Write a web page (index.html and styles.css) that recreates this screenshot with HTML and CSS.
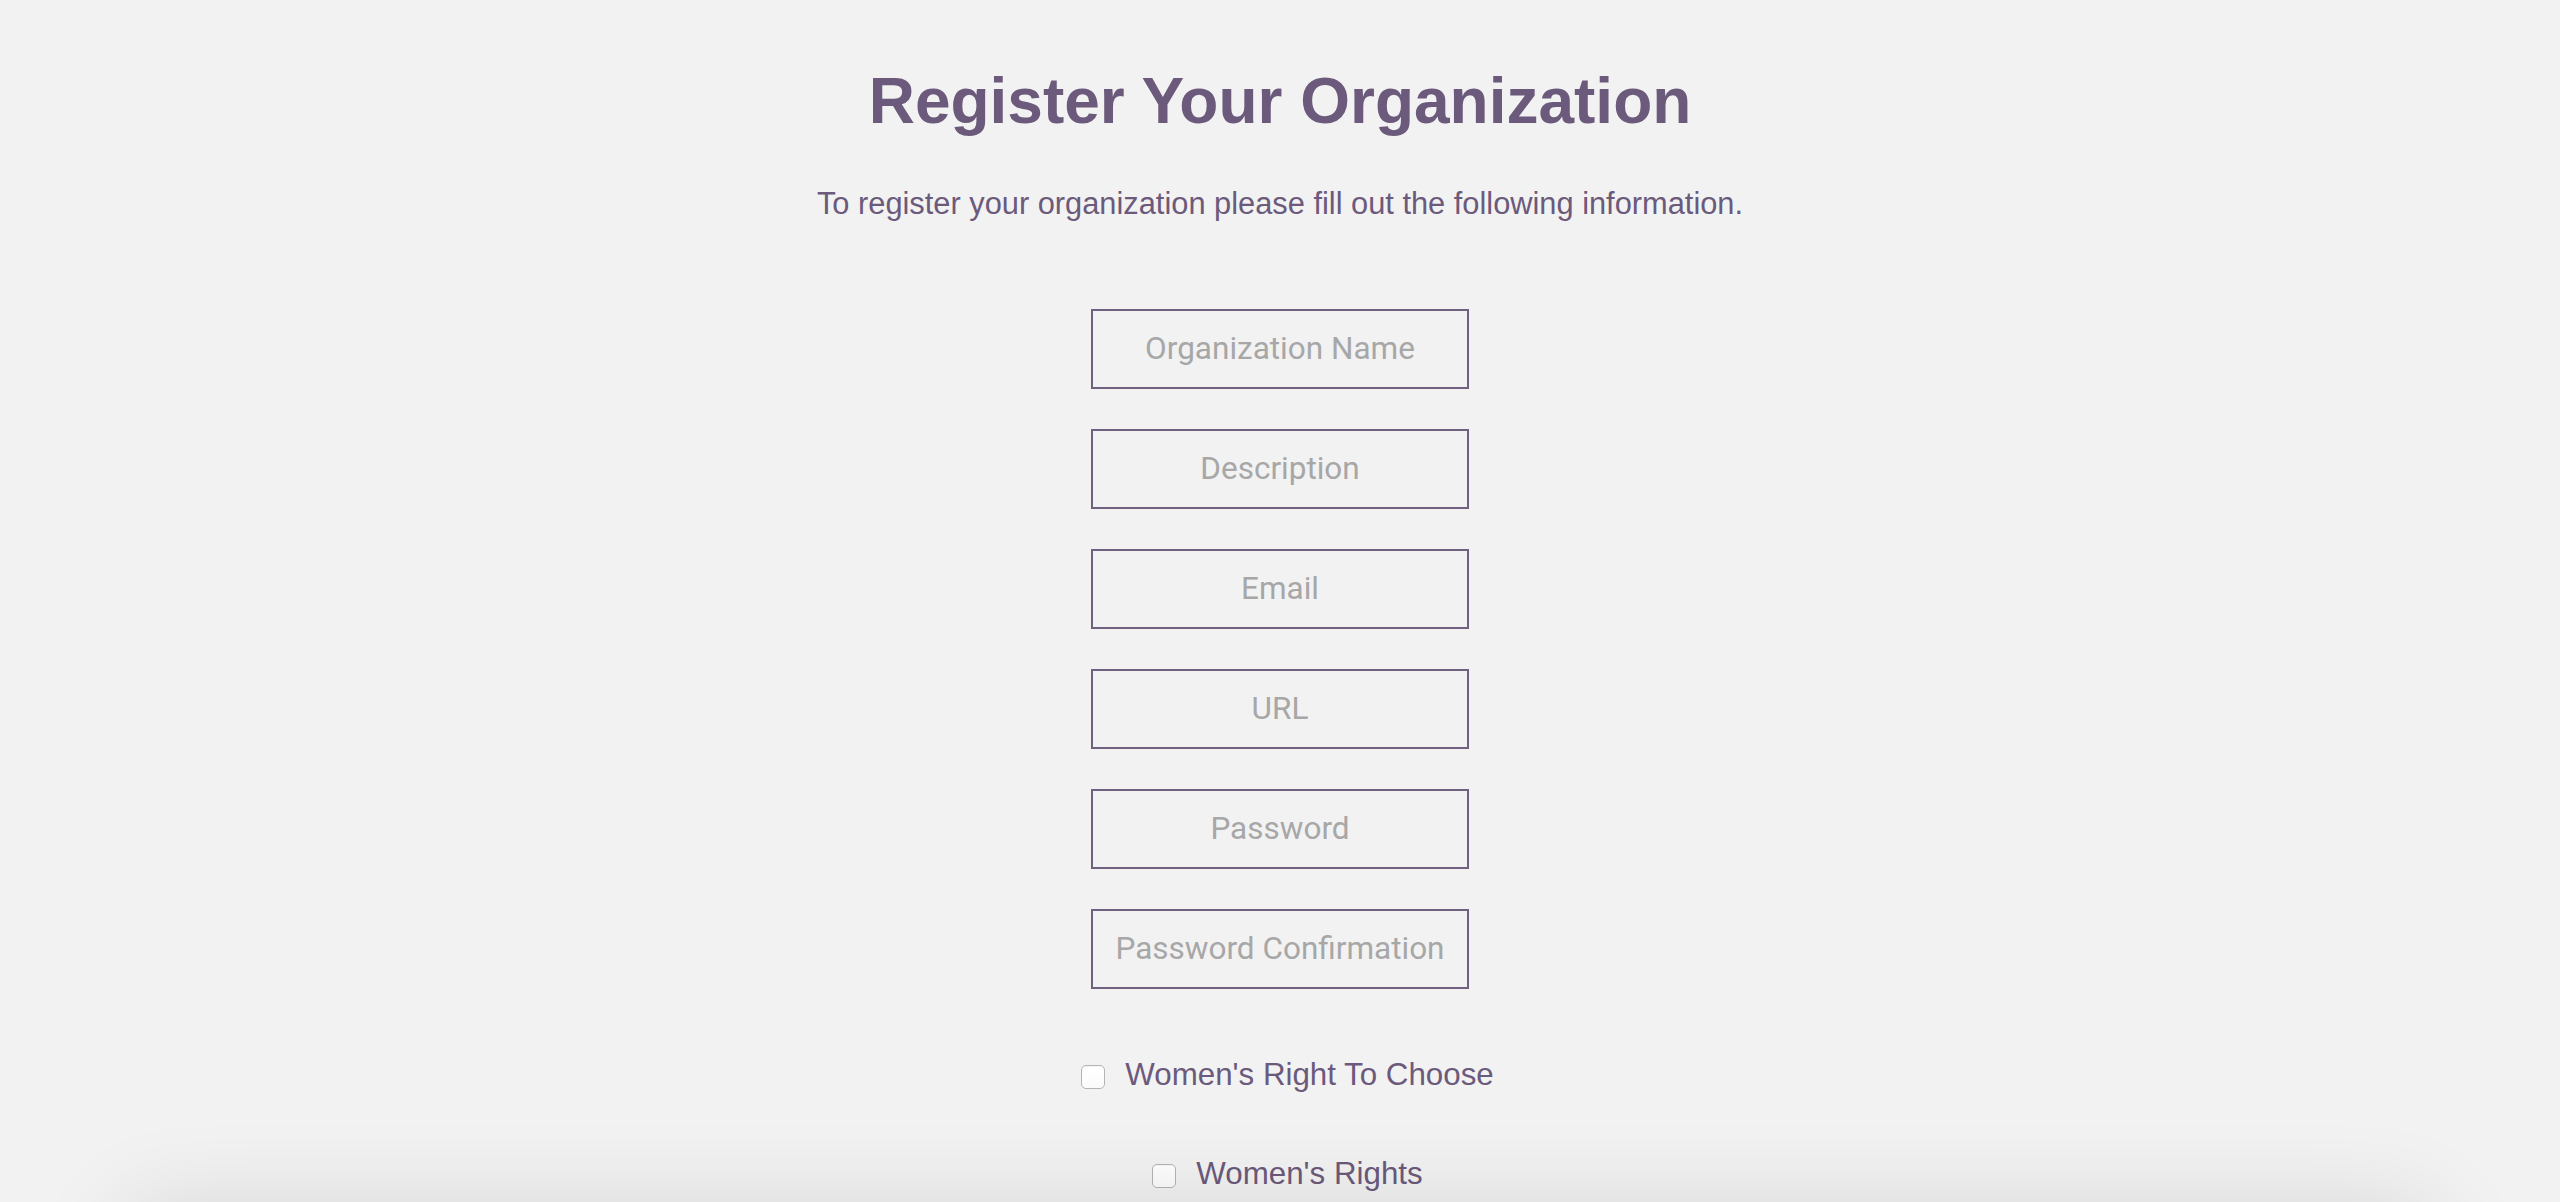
FILE: index.html
```html
<!DOCTYPE html>
<html lang="en">
<head>
<meta charset="utf-8">
<title>Register Your Organization</title>
<link rel="stylesheet" href="styles.css">
</head>
<body>
<main class="page">
  <h1 class="title">Register Your Organization</h1>
  <p class="subtitle">To register your organization please fill out the following information.</p>
  <form class="form">
    <input class="field" type="text" placeholder="Organization Name">
    <input class="field" type="text" placeholder="Description">
    <input class="field" type="email" placeholder="Email">
    <input class="field" type="url" placeholder="URL">
    <input class="field" type="password" placeholder="Password">
    <input class="field" type="password" placeholder="Password Confirmation">
    <div class="choices">
      <label class="choice"><input class="check" type="checkbox"><span class="choice-text">Women's Right To Choose</span></label>
      <label class="choice"><input class="check" type="checkbox"><span class="choice-text">Women's Rights</span></label>
    </div>
  </form>
  <section class="panel"></section>
</main>
</body>
</html>
```
FILE: styles.css
```css
html, body {
  margin: 0;
  padding: 0;
  background: #f2f2f2;
}
body {
  font-family: "Liberation Sans", Arial, sans-serif;
  color: #6b5a7b;
  overflow: hidden;
}
.page {
  display: flex;
  flex-direction: column;
  align-items: center;
  text-align: center;
}
.title {
  margin: 69px 0 0;
  font-size: 64px;
  line-height: 1;
  font-weight: 700;
  color: #6b5a7b;
}
.subtitle {
  margin: 56px 0 0;
  font-size: 30.8px;
  line-height: 1;
  color: #6b5a7b;
}
.form {
  margin-top: 89px;
  display: flex;
  flex-direction: column;
  align-items: center;
  gap: 40px;
}
.field {
  box-sizing: border-box;
  width: 378px;
  height: 80px;
  margin: 0;
  padding: 0 4px;
  border: 2px solid #716080;
  background: transparent;
  font-family: Roboto, "Liberation Sans", sans-serif;
  font-size: 31.5px;
  text-align: center;
  color: #555;
  outline: none;
}
.field::placeholder {
  color: #a7a7a7;
}
.choices {
  margin-top: 30px;
  display: flex;
  flex-direction: column;
  align-items: center;
  gap: 68px;
}
.choice {
  display: flex;
  align-items: flex-start;
  gap: 20px;
  padding-left: 15px;
  cursor: pointer;
}
.check {
  appearance: none;
  -webkit-appearance: none;
  box-sizing: border-box;
  width: 24px;
  height: 24px;
  margin: 6px 0 0;
  border: 1px solid #b4b4b4;
  border-radius: 5px;
  background: linear-gradient(#ffffff, #fbfbfb);
  box-shadow: inset 0 1px 1px rgba(0, 0, 0, 0.04);
}
.choice-text {
  font-size: 31.3px;
  line-height: 1;
  color: #6b5a7b;
}
.panel {
  align-self: stretch;
  margin: 27px 130px 0;
  height: 300px;
  background: #f2f2f2;
  box-shadow: 0 0 100px rgba(0, 0, 0, 0.14);
}
```
